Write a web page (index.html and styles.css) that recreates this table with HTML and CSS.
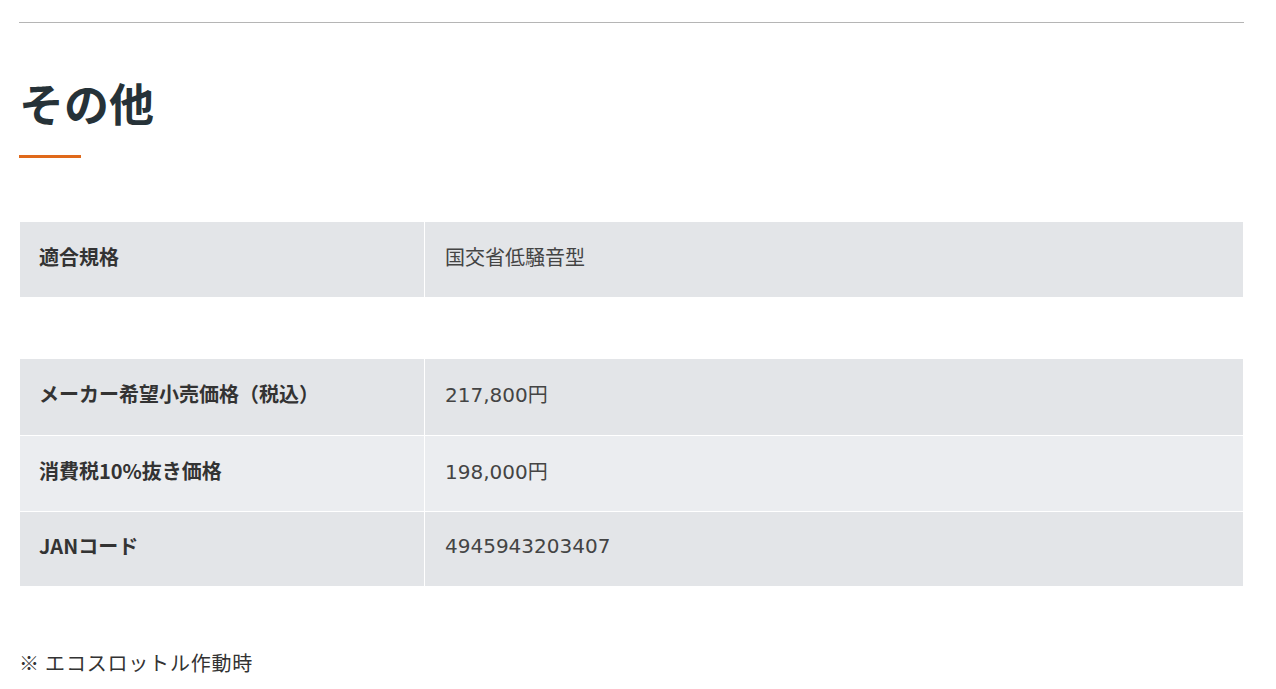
FILE: index.html
```html
<!DOCTYPE html>
<html lang="ja">
<head>
  <meta charset="UTF-8" />
  <title>その他</title>
  <link rel="stylesheet" href="styles.css">
</head>
<body>
  <div class="section">
    <hr class="rule">
    <h2 class="title">その他</h2>

    <table class="spec">
      <tr>
        <th>適合規格</th>
        <td>国交省低騒音型</td>
      </tr>
    </table>

    <table class="spec">
      <tr>
        <th>メーカー希望小売価格（税込）</th>
        <td>217,800円</td>
      </tr>
      <tr>
        <th>消費税10%抜き価格</th>
        <td>198,000円</td>
      </tr>
      <tr>
        <th>JANコード</th>
        <td>4945943203407</td>
      </tr>
    </table>

    <p class="note">※ エコスロットル作動時</p>
  </div>
</body>
</html>
```

FILE: styles.css
```css
body {
  margin: 0;
  font-family: "Noto Sans CJK JP", "Noto Sans", sans-serif;
  color: #333;
  background: #fff;
}
.section {
  padding: 22px 32px 0 19px;
}
.rule {
  margin: 0;
  border: none;
  border-top: 1px solid #b5b5b5;
}
.title {
  margin: 48px 0 0;
  font-size: 45px;
  line-height: 64px;
  font-weight: 700;
  color: #263238;
  padding-bottom: 12px;
  position: relative;
}
.title::after {
  content: "";
  position: absolute;
  left: 0;
  bottom: -11px;
  width: 62px;
  height: 3px;
  background: #e0691a;
}
.spec {
  width: calc(100% - 2px);
  margin: 75px 0 0 1px;
  border-collapse: collapse;
  font-size: 20px;
}
.spec + .spec {
  margin-top: 62px;
}
.spec tr {
  background: #e3e5e8;
  height: 76px;
  border-bottom: 1px solid #fff;
}
.spec tr:nth-child(even) {
  background: #ebedf0;
}
.spec tr:last-child {
  border-bottom: none;
  height: 75px;
}
.spec th {
  width: 385px;
  padding: 0 0 6px 19px;
  text-align: left;
  font-weight: 700;
  color: #333;
  border-right: 1px solid #fff;
}
.spec td {
  padding: 0 20px 6px;
  color: #444;
  font-family: "DejaVu Sans", "Noto Sans CJK JP", sans-serif;
  font-size: 20px;
}
.note {
  margin: 62px 0 0;
  font-size: 20px;
  letter-spacing: 0.8px;
  color: #333;
}
```
